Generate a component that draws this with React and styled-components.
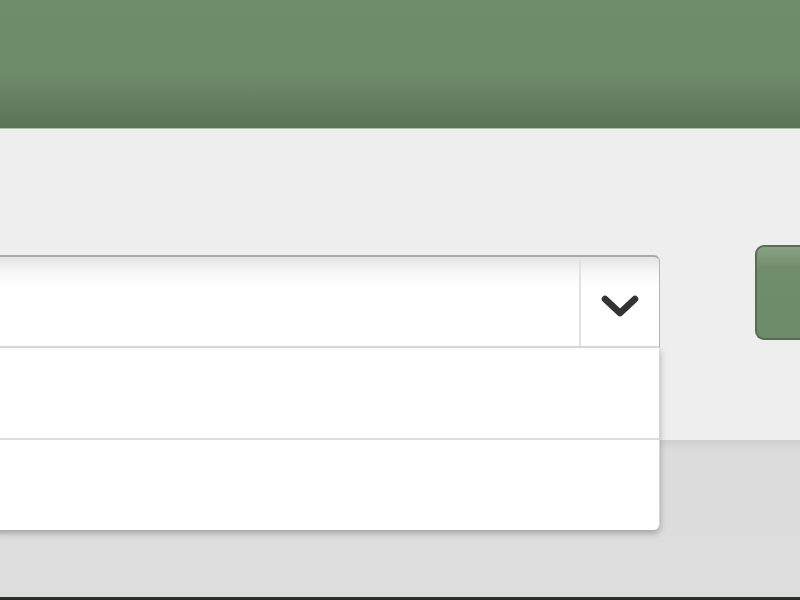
import React from "react";
import styled, { createGlobalStyle } from "styled-components";

const Global = createGlobalStyle`
  html, body { margin: 0; padding: 0; overflow: hidden; }
  body { font-family: "Liberation Sans", Arial, sans-serif; background: #dddddd; }
`;

const Page = styled.div`
  width: 800px;
  height: 600px;
  display: flex;
  flex-direction: column;
  overflow: hidden;
`;

const Header = styled.header`
  height: 128px;
  flex: none;
  background: linear-gradient(to bottom, #6f8c6b 0%, #6d8a69 60%, #5b7357 100%);
  border-bottom: 1px solid #b3bdb0;
`;

const Panel = styled.section`
  height: 311px;
  flex: none;
  background: #eeeeee;
  display: flex;
  align-items: flex-start;
  padding-top: 116px;
  box-sizing: border-box;
  position: relative;
  z-index: 2;
`;

const SelectWrap = styled.div`
  position: relative;
  margin-top: 10px;
  margin-left: -10px;
  width: 670px;
  flex: none;
`;

const SelectBox = styled.div`
  height: 93px;
  box-sizing: border-box;
  display: flex;
  background: linear-gradient(to bottom, #e4e4e4 0px, #f6f6f6 14px, #ffffff 28px, #ffffff 100%);
  border: 1px solid #b4b4b4;
  border-top: 2px solid #aaaaaa;
  border-bottom: 2px solid #dddddd;
  border-radius: 6px 6px 0 0;
`;

const SelectValue = styled.div`
  flex: 1;
`;

const ArrowCell = styled.div`
  width: 80px;
  flex: none;
  border-left: 2px solid #e2e2e2;
  display: flex;
  align-items: center;
  justify-content: center;
  padding-top: 8px;
  box-sizing: border-box;
  color: #333333;
`;

const Menu = styled.ul`
  position: absolute;
  left: 0;
  right: 0;
  top: 93px;
  margin: 0;
  padding: 0;
  list-style: none;
  background: #ffffff;
  border-right: 1px solid #d6d6d6;
  border-radius: 0 0 6px 6px;
  box-shadow: 0 3px 6px rgba(0, 0, 0, 0.28);
  z-index: 5;
`;

const MenuItem = styled.li`
  height: 90px;
  border-top: ${(p) => (p.$first ? "none" : "2px solid #dcdcdc")};
`;

const GoButton = styled.button`
  margin-left: 95px;
  width: 100px;
  height: 95px;
  flex: none;
  border: 2px solid #56704f;
  border-right: none;
  border-radius: 9px 0 0 9px;
  background: linear-gradient(to bottom, #8aa285 0%, #718e6c 22%, #6d8a69 100%);
  padding: 0;
`;

const Lower = styled.section`
  flex: 1;
  background: linear-gradient(to bottom, #cfcfcf 0px, #dcdcdc 10px, #dddddd 100%);
  border-bottom: 3px solid #2a2c2a;
`;

function Chevron() {
  return (
    <svg width="40" height="26" viewBox="0 0 40 26" aria-hidden="true">
      <polyline
        points="5,6 20,20 35,6"
        fill="none"
        stroke="#333333"
        strokeWidth="6.5"
        strokeLinecap="round"
        strokeLinejoin="round"
      />
    </svg>
  );
}

export default function App() {
  return (
    <>
      <Global />
      <Page>
        <Header />
        <Panel>
          <SelectWrap>
            <SelectBox>
              <SelectValue />
              <ArrowCell>
                <Chevron />
              </ArrowCell>
            </SelectBox>
            <Menu>
              <MenuItem $first />
              <MenuItem />
            </Menu>
          </SelectWrap>
          <GoButton aria-label="Go" />
        </Panel>
        <Lower />
      </Page>
    </>
  );
}
